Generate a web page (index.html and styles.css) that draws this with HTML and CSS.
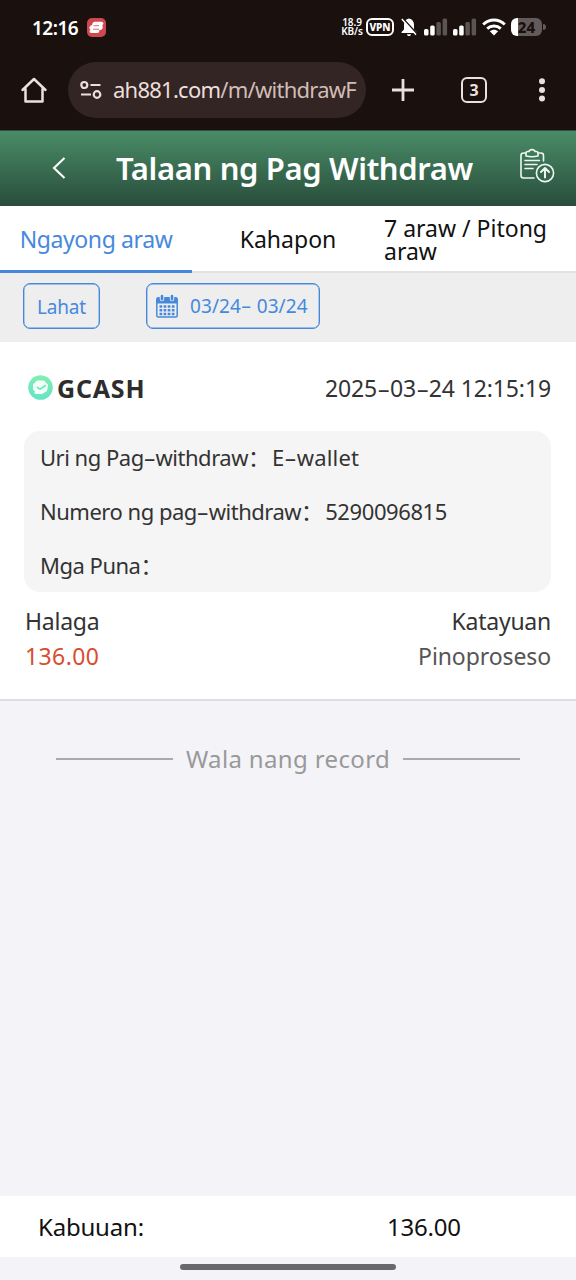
FILE: index.html
```html
<!DOCTYPE html>
<html lang="fil">
<head>
<meta charset="utf-8">
<title>Talaan ng Pag Withdraw</title>
<link rel="stylesheet" href="styles.css">
</head>
<body>
<div class="screen">
  <div class="status">
    <span class="clock">12:16</span>
    <svg class="app-badge" width="19" height="19" viewBox="0 0 19 19"><rect width="19" height="19" rx="5" fill="#cf4850"/><path d="M7.800 3.800H14Q17 4 16.200 6L15.200 8Q16.500 8.800 15.300 10.700Q14.500 12 13 12H12.500Q12.300 15 10.500 15H4Q2 14.700 2.700 12.800L3.500 11Q1.500 10.500 2.800 8.500Q3.600 7.300 5 7.200Q5.500 4 7.800 3.800z" fill="#fff"/><path d="M6.500 7.700H12M6 11.200H12" stroke="#cf4850" stroke-width=".8"/></svg>
    <span class="speed"><span>18.9</span><span>KB/s</span></span>
    <span class="vpn">VPN</span>
    <svg class="bell" width="18" height="20" viewBox="0 0 18 20"><path d="M9 1.500c-3.300.8-5 3-5 6v5L1.500 15v1h15v-1L14 12.500v-5c0-3-1.700-5.200-5-6z" fill="#fff"/><path d="M7 17.200h4c0 1-.8 1.800-2 1.800s-2-.8-2-1.800z" fill="#fff"/><path d="M3.300 1.700L17 16.800" stroke="#1a100e" stroke-width="1.500"/><path d="M1.800 2L16 17.800" stroke="#fff" stroke-width="1.500"/></svg>
    <svg class="signal" width="24" height="18" viewBox="0 0 24 18"><g fill="#fff"><rect x="0" y="11" width="4.500" height="6.500" rx="1.500"/><rect x="6.200" y="7.500" width="4.500" height="10" rx="1.500"/></g><g fill="#5c5453"><rect x="12.400" y="4" width="4.500" height="13.500" rx="1.500"/><rect x="18.600" y="0.500" width="4.500" height="17" rx="1.500"/></g></svg>
    <svg class="signal second" width="24" height="18" viewBox="0 0 24 18"><g fill="#fff"><rect x="0" y="11" width="4.500" height="6.500" rx="1.500"/><rect x="6.200" y="7.500" width="4.500" height="10" rx="1.500"/></g><g fill="#5c5453"><rect x="12.400" y="4" width="4.500" height="13.500" rx="1.500"/><rect x="18.600" y="0.500" width="4.500" height="17" rx="1.500"/></g></svg>
    <svg class="wifi" width="24" height="18" viewBox="0 0 24 18"><g fill="none" stroke="#fff" stroke-width="3"><path d="M1.200 6.500C7.500.6 16.500.6 22.800 6.500"/><path d="M5.200 10.700c4-3.500 9.600-3.500 13.600 0"/></g><path d="M12 17.500l-4.200-4.200c2.500-2.100 5.900-2.100 8.400 0z" fill="#fff"/></svg>
    <span class="battery">24</span><span class="cap"></span>
  </div>

  <div class="toolbar">
    <svg class="home" width="28" height="28" viewBox="0 0 28 28"><path d="M5.500 13V25.500H22.500V13M2.500 14L14 3l11.500 11" fill="none" stroke="#eddfdc" stroke-width="2.500" stroke-linejoin="round" stroke-linecap="round"/></svg>
    <div class="omnibox">
      <svg width="22" height="20" viewBox="0 0 22 20"><g fill="none" stroke="#eddfdc" stroke-width="2.200"><circle cx="4.300" cy="5" r="3"/><path d="M10.500 5h10M1 14.500h10"/><circle cx="17" cy="14.500" r="3.300"/></g></svg>
      <span class="url">ah881.com<span class="path">/m/withdrawF</span></span>
    </div>
    <svg class="plus" width="24" height="24" viewBox="0 0 24 24"><path d="M12 1v22M1 12h22" stroke="#eddfdc" stroke-width="2.800"/></svg>
    <span class="tabcount">3</span>
    <svg class="more" width="8" height="24" viewBox="0 0 8 24"><g fill="#eddfdc"><circle cx="4" cy="3.300" r="3"/><circle cx="4" cy="11.900" r="3"/><circle cx="4" cy="20.500" r="3"/></g></svg>
  </div>

  <header class="header">
    <svg class="back" width="14" height="22" viewBox="0 0 14 22"><path d="M12.500 1L2 11l10.500 10" fill="none" stroke="#fff" stroke-width="2.100"/></svg>
    <h1 class="title">Talaan ng Pag Withdraw</h1>
    <svg class="records" width="36" height="36" viewBox="0 0 36 36"><g fill="none" stroke="#eef8f1" stroke-width="1.600" stroke-linecap="round" stroke-linejoin="round"><path d="M7 5H4.500Q2 5 2 7.500V27.500Q2 30 4.500 30H15M19 5h3q2.500 0 2.500 2.500V13"/><path d="M7 8V5q0-1.500 1.500-1.500H10C10.500 1 15.500 1 16 3.500h1.500Q19 3.500 19 5V8Q13 9.500 7 8z"/><path d="M6 12.500H20.500M6 16.500H18M6 20.500H14"/><circle cx="26" cy="25" r="8.600"/><path d="M26 29.500V20.500M22 24l4-4 4 4" stroke-width="2"/></g></svg>
  </header>

  <nav class="tabs">
    <span class="tab active">Ngayong araw</span>
    <span class="tab">Kahapon</span>
    <span class="tab left">7 araw / Pitong<br>araw</span>
  </nav>

  <div class="filters">
    <span class="chip all">Lahat</span>
    <span class="chip range">
      <svg width="22" height="24" viewBox="0 0 22 24"><rect x=".8" y="4" width="20.400" height="19" rx="1.500" fill="none" stroke="#4689dc" stroke-width="1.500"/><path d="M.5 9.500V5Q.5 3 2.500 3h17q2 0 2 2v4.500z" fill="#4689dc"/><g stroke="#eee" stroke-width="4.500" stroke-linecap="round"><path d="M6 2.500v2.500M16 2.500v2.500"/></g><g stroke="#4689dc" stroke-width="2.600" stroke-linecap="round"><path d="M6 2v3.300M16 2v3.300"/></g><path d="M3.500 12.500h15M3.500 16.300h15M3.500 20.100h15" stroke="#4689dc" stroke-width="2.500" stroke-dasharray="2.700 1.400"/></svg>
      <span class="dates">03/24<span class="dash">-</span> 03/24</span>
    </span>
  </div>

  <section class="card">
    <div class="card-head">
      <svg width="25" height="25" viewBox="0 0 25 25"><defs><linearGradient id="mint" x2="0" y2="1"><stop stop-color="#80f0b0"/><stop offset="1" stop-color="#65e2c8"/></linearGradient></defs><circle cx="12.500" cy="12.500" r="12.300" fill="url(#mint)"/><path d="M9.500 6.500h6l3.500 4-1 5-4 2.500H7.500l.5-1.500-2-2.500V10z" fill="#f5fffa" stroke="#f5fffa" stroke-width="2" stroke-linejoin="round"/><path d="M9 12l3 2.200 6-4" fill="none" stroke="#73e7bf" stroke-width="1.800"/></svg>
      <strong class="wallet">GCASH</strong>
      <span class="stamp">2025<span class="dash">-</span>03<span class="dash">-</span>24 12:15:19</span>
    </div>
    <div class="details">
      <p><span class="label">Uri ng Pag<span class="dash">-</span>withdraw：</span><span class="kind">E<span class="dash">-</span>wallet</span></p>
      <p><span class="label">Numero ng pag<span class="dash">-</span>withdraw：</span><span class="number">5290096815</span></p>
      <p><span class="label">Mga Puna：</span></p>
    </div>
    <div class="pair"><span>Halaga</span><span>Katayuan</span></div>
    <div class="pair values"><span class="amount">136.00</span><span class="state">Pinoproseso</span></div>
  </section>

  <div class="end"><span class="rule"></span><span class="end-text">Wala nang record</span><span class="rule"></span></div>

  <footer class="total"><span class="total-label">Kabuuan:</span><span class="total-value">136.00</span></footer>
  <div class="gesture"><span class="pill"></span></div>
</div>
</body>
</html>
```
FILE: styles.css
```css
* { box-sizing: border-box; }
body { margin: 0; background: #f3f3f8; font-family: "Noto Sans", "Noto Sans CJK SC", sans-serif; }
svg { display: block; flex: none; }
p, h1 { margin: 0; }
.screen { width: 576px; height: 1280px; display: flex; flex-direction: column; overflow: hidden; white-space: nowrap; color: #333; }
.dash { display: inline-block; transform: scaleX(1.75); margin: 0 .12em; }

.status { height: 54px; flex: none; background: #1a100e; color: #fff; display: flex; align-items: center; padding: 0 0 0 32px; }
.clock { font-size: 19px; font-weight: 600; width: 46px; letter-spacing: -.5px; margin-top: 1px; }
.app-badge { margin-left: 9px; margin-right: 234px; }
.speed { width: 24px; display: flex; flex-direction: column; align-items: center; font-size: 10px; line-height: 9px; font-weight: 600; letter-spacing: -.1px; }
.vpn { width: 28px; height: 18px; border: 2px solid #fff; border-radius: 6px; margin-left: 2px; font-size: 10px; line-height: 14px; font-weight: 800; text-align: center; display: flex; justify-content: center; }
.bell { margin-left: 6px; }
.signal { margin-left: 6px; }
.signal.second { margin-left: 5px; }
.wifi { margin-left: 5px; }
.battery { width: 31px; height: 18px; margin-left: 5px; border-radius: 6px; background: linear-gradient(90deg, #fff 7.500px, #625b5a 7.500px); display: flex; justify-content: center; font-size: 15px; line-height: 18px; font-weight: 800; color: #1a100e; }
.cap { width: 3px; height: 6px; margin-left: 1px; border-radius: 0 3px 3px 0; background: #625b5a; }

.toolbar { height: 76px; flex: none; background: #1a100e; display: flex; align-items: center; padding: 0 0 4px 20px; }
.omnibox { width: 298px; height: 56px; margin-left: 20px; border-radius: 28px; background: #322523; display: flex; align-items: center; padding-left: 12px; }
.url { margin-left: 11px; margin-top: -2px; font-size: 22px; line-height: 32px; letter-spacing: -.75px; color: #eddfdc; }
.path { color: #d1bdb8; }
.plus { margin-left: 25px; }
.tabcount { width: 26px; height: 26px; margin-left: 46px; border: 2.500px solid #eddfdc; border-radius: 6px; color: #eddfdc; font-size: 16px; line-height: 22px; font-weight: 700; text-align: center; }
.more { margin-left: 51px; }

.header { height: 76px; flex: none; background: linear-gradient(#498c67, #294d3b); display: flex; align-items: center; padding: 0 0 2px 52px; color: #fff; border-top: 1px solid #3c4a3c; }
.title { margin-left: 50px; width: 360px; font-size: 31px; line-height: 40px; font-weight: 600; letter-spacing: -.36px; }
.records { margin-left: 43px; margin-top: -4px; }

.tabs { height: 67px; flex: none; background: linear-gradient(#fff 65px, #e2e2e2 65px); display: grid; grid-template-columns: repeat(3, 1fr); color: #111; font-size: 23px; line-height: 23px; }
.tab { height: 67px; display: flex; align-items: center; justify-content: center; }
.tab.active { color: #4689dc; border-bottom: 3px solid #4689dc; padding-top: 3px; letter-spacing: -.4px; }
.tab.left { justify-content: flex-start; }

.filters { height: 69px; flex: none; background: #eee; display: flex; padding: 10px 0 0 23px; color: #4689dc; }
.chip { height: 46px; border: 1.500px solid #4689dc; border-radius: 7px; display: flex; align-items: center; font-size: 19px; box-shadow: inset 0 0 0 .4px #4689dc; }
.all { width: 77px; justify-content: center; padding-top: 2px; letter-spacing: -.2px; }
.range { width: 174px; margin-left: 46px; padding-left: 9px; }
.dates { margin-left: 12px; letter-spacing: .08px; }

.card { height: 359px; flex: none; background: #fff; border-bottom: 2px solid #dedee0; padding: 0 25px 0 24px; }
.card-head { height: 89px; display: flex; align-items: center; padding: 2px 0 0 4px; font-size: 23px; }
.wallet { margin-left: 4px; font-size: 25px; line-height: 30px; letter-spacing: .8px; font-weight: 700; color: #2d2d2d; }
.stamp { margin-left: auto; letter-spacing: -.12px; }
.details { height: 161px; border-radius: 16px; background: #f5f5f5; padding: 0 16px; font-size: 22px; line-height: 54px; }
.details p { height: 54px; display: flex; position: relative; top: -1px; }
.label { letter-spacing: -.49px; margin-right: 2.500px; }
.kind { letter-spacing: .15px; }
.number { letter-spacing: -.4px; }
.pair { height: 34px; margin-top: 12px; padding-left: 1px; display: flex; justify-content: space-between; align-items: center; font-size: 23px; line-height: 34px; letter-spacing: -.25px; }
.pair.values { margin-top: 1px; letter-spacing: -.1px; }
.amount { color: #da4c2f; letter-spacing: .4px; }
.state { color: #555; }

.end { display: flex; align-items: center; height: 40px; padding: 0 56px; margin-top: 38px; color: #999; font-size: 24px; letter-spacing: .35px; }
.rule { width: 117px; height: 1.500px; background: #aaa; }
.end-text { flex: 1; text-align: center; margin-top: -2px; }

.total { height: 61px; flex: none; margin-top: auto; background: #fff; display: flex; align-items: center; color: #111; font-size: 24px; letter-spacing: -.2px; padding-left: 38px; }
.total-label { width: 349px; }
.gesture { height: 23px; flex: none; padding-top: 7px; }
.pill { display: block; width: 216px; height: 6px; margin: 0 auto; border-radius: 3px; background: #69696b; }
```
